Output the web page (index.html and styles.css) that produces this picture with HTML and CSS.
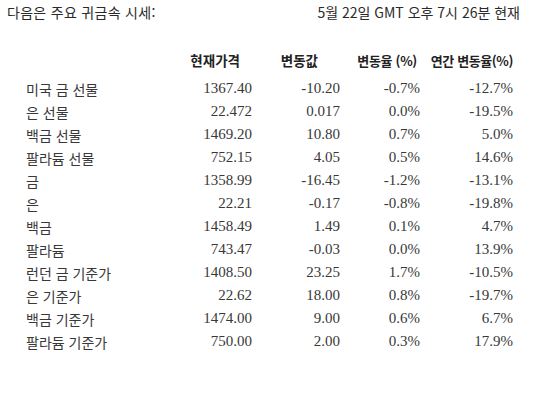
FILE: index.html
```html
<!DOCTYPE html>
<html lang="ko">
<head>
    <meta charset="UTF-8">
    <title>귀금속 시세</title>
    <link rel="stylesheet" href="styles.css">
</head>
<body>
    <div class="page">
        <div class="title-row">
            <span class="intro">다음은 주요 귀금속 시세:</span>
            <span class="as-of">5월 22일 GMT 오후 7시 26분 현재</span>
        </div>
        <table class="prices">
            <thead>
                <tr>
                    <th class="name"></th>
                    <th class="col-price">현재가격</th>
                    <th class="col-chg">변동값</th>
                    <th class="col-pct">변동율 (%)</th>
                    <th class="col-year">연간 변동율(%)</th>
                </tr>
            </thead>
            <tbody>
                <tr><td class="name">미국 금 선물</td><td>1367.40</td><td>-10.20</td><td>-0.7%</td><td>-12.7%</td></tr>
                <tr><td class="name">은 선물</td><td>22.472</td><td>0.017</td><td>0.0%</td><td>-19.5%</td></tr>
                <tr><td class="name">백금 선물</td><td>1469.20</td><td>10.80</td><td>0.7%</td><td>5.0%</td></tr>
                <tr><td class="name">팔라듐 선물</td><td>752.15</td><td>4.05</td><td>0.5%</td><td>14.6%</td></tr>
                <tr><td class="name">금</td><td>1358.99</td><td>-16.45</td><td>-1.2%</td><td>-13.1%</td></tr>
                <tr><td class="name">은</td><td>22.21</td><td>-0.17</td><td>-0.8%</td><td>-19.8%</td></tr>
                <tr><td class="name">백금</td><td>1458.49</td><td>1.49</td><td>0.1%</td><td>4.7%</td></tr>
                <tr><td class="name">팔라듐</td><td>743.47</td><td>-0.03</td><td>0.0%</td><td>13.9%</td></tr>
                <tr><td class="name">런던 금 기준가</td><td>1408.50</td><td>23.25</td><td>1.7%</td><td>-10.5%</td></tr>
                <tr><td class="name">은 기준가</td><td>22.62</td><td>18.00</td><td>0.8%</td><td>-19.7%</td></tr>
                <tr><td class="name">백금 기준가</td><td>1474.00</td><td>9.00</td><td>0.6%</td><td>6.7%</td></tr>
                <tr><td class="name">팔라듐 기준가</td><td>750.00</td><td>2.00</td><td>0.3%</td><td>17.9%</td></tr>
            </tbody>
        </table>
    </div>
</body>
</html>
```

FILE: styles.css
```css
body {
    margin: 0;
    background: #fff;
    color: #2a2a2a;
    font-family: "Noto Sans CJK KR", "Liberation Sans", sans-serif;
}

.page {
    padding: 3px 0 0 7px;
}

.title-row {
    display: flex;
    justify-content: space-between;
    width: 513px;
    font-size: 14px;
    line-height: 18px;
}

.intro {
    letter-spacing: 0.3px;
}

.prices {
    border-collapse: collapse;
    margin: 28px 0 0 19px;
    font-size: 14px;
}

.prices th {
    font-weight: bold;
    font-size: 13.5px;
    height: 22px;
    padding: 0 0 6px 0;
    text-align: right;
    white-space: nowrap;
    color: #222;
}

.prices td {
    height: 23px;
    padding: 0;
    text-align: right;
    font-family: "Liberation Serif", "Noto Sans CJK KR", serif;
    font-size: 15px;
    color: #383838;
}

.prices .name {
    width: 150px;
    text-align: left;
    font-family: "Noto Sans CJK KR", sans-serif;
    font-size: 14px;
}

/* header text sits left of the right edge of each number column */
.prices .col-price { width: 64px; padding-right: 12px; }
.prices .col-chg { width: 66px; padding-right: 22px; }
.prices .col-pct { width: 77px; padding-right: 3px; font-size: 13px; letter-spacing: -0.3px; }
.prices .col-year { width: 93px; font-size: 13px; letter-spacing: -0.4px; }
```
